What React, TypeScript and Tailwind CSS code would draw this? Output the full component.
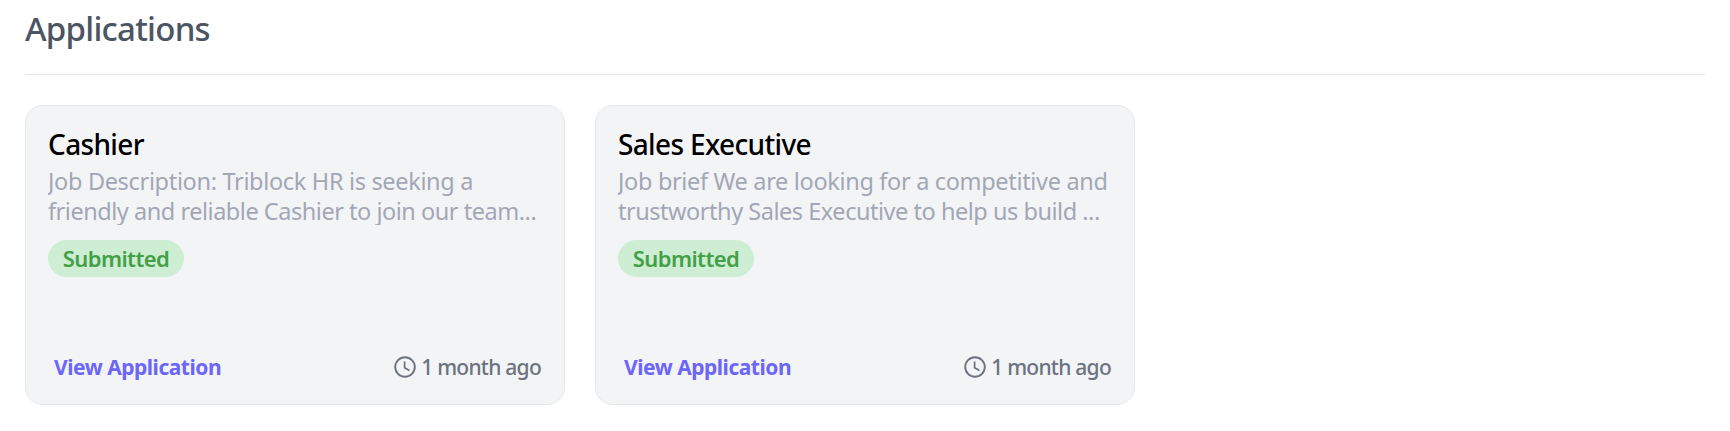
export interface Application {
  title: string;
  description: string[];
  status: string;
  time: string;
}

const applications: Application[] = [
  {
    title: "Cashier",
    description: [
      "Job Description: Triblock HR is seeking a",
      "friendly and reliable Cashier to join our team...",
    ],
    status: "Submitted",
    time: "1 month ago",
  },
  {
    title: "Sales Executive",
    description: [
      "Job brief We are looking for a competitive and",
      "trustworthy Sales Executive to help us build ...",
    ],
    status: "Submitted",
    time: "1 month ago",
  },
];

function ClockIcon() {
  return (
    <svg width="22" height="22" viewBox="0 0 22 22" fill="none" stroke="currentColor">
      <circle cx="11" cy="11" r="9.8" strokeWidth="1.9" />
      <path d="M10.6 5.5v6.2l4.9 2.8" strokeWidth="1.7" />
    </svg>
  );
}

function ApplicationCard({ application }: { application: Application }) {
  return (
    <div className="flex h-[300px] w-[540px] flex-col rounded-[18px] border border-[#e5e7eb] bg-[#f3f4f6] px-[22px] pt-[19px] pb-[21px]">
      <h2 className="h-[40px] text-[28px] leading-[38px] font-medium tracking-[-0.65px] whitespace-nowrap text-black">
        {application.title}
      </h2>
      <div className="h-[60px] overflow-hidden pt-[1px] text-[23.5px] leading-[30px] text-[#a2a7b5]">
        {application.description.map((line) => (
          <p key={line} className="tracking-[-0.47px] whitespace-nowrap first:tracking-[-0.33px]">
            {line}
          </p>
        ))}
      </div>
      <div className="mt-[15px] flex">
        <span className="flex h-[37px] w-[136px] items-center justify-center rounded-full bg-[#cdeed3] text-[22px] font-semibold tracking-[-0.6px] text-[#43a047]">
          {application.status}
        </span>
      </div>
      <div className="mt-auto flex items-center justify-between pr-[1px] pl-[6px]">
        <a className="text-[21px] leading-[32px] font-bold tracking-[-0.47px] text-[#6c66f8]">
          View Application
        </a>
        <div className="flex items-center gap-[5px] text-[#6b7280]">
          <ClockIcon />
          <span className="text-[21px] leading-[32px] font-medium tracking-[-0.73px]">
            {application.time}
          </span>
        </div>
      </div>
    </div>
  );
}

function App() {
  return (
    <div className="h-[431px] bg-white px-[25px] font-['Noto_Sans',sans-serif]">
      <div className="h-[75px] border-b border-[#e3e4e6] pt-[6px]">
        <h1 className="text-[33px] leading-[46px] font-medium tracking-[-0.75px] text-[#4b5563]">
          Applications
        </h1>
      </div>
      <div className="flex gap-[30px] pt-[30px]">
        {applications.map((application) => (
          <ApplicationCard key={application.title} application={application} />
        ))}
      </div>
    </div>
  );
}

export default App;
